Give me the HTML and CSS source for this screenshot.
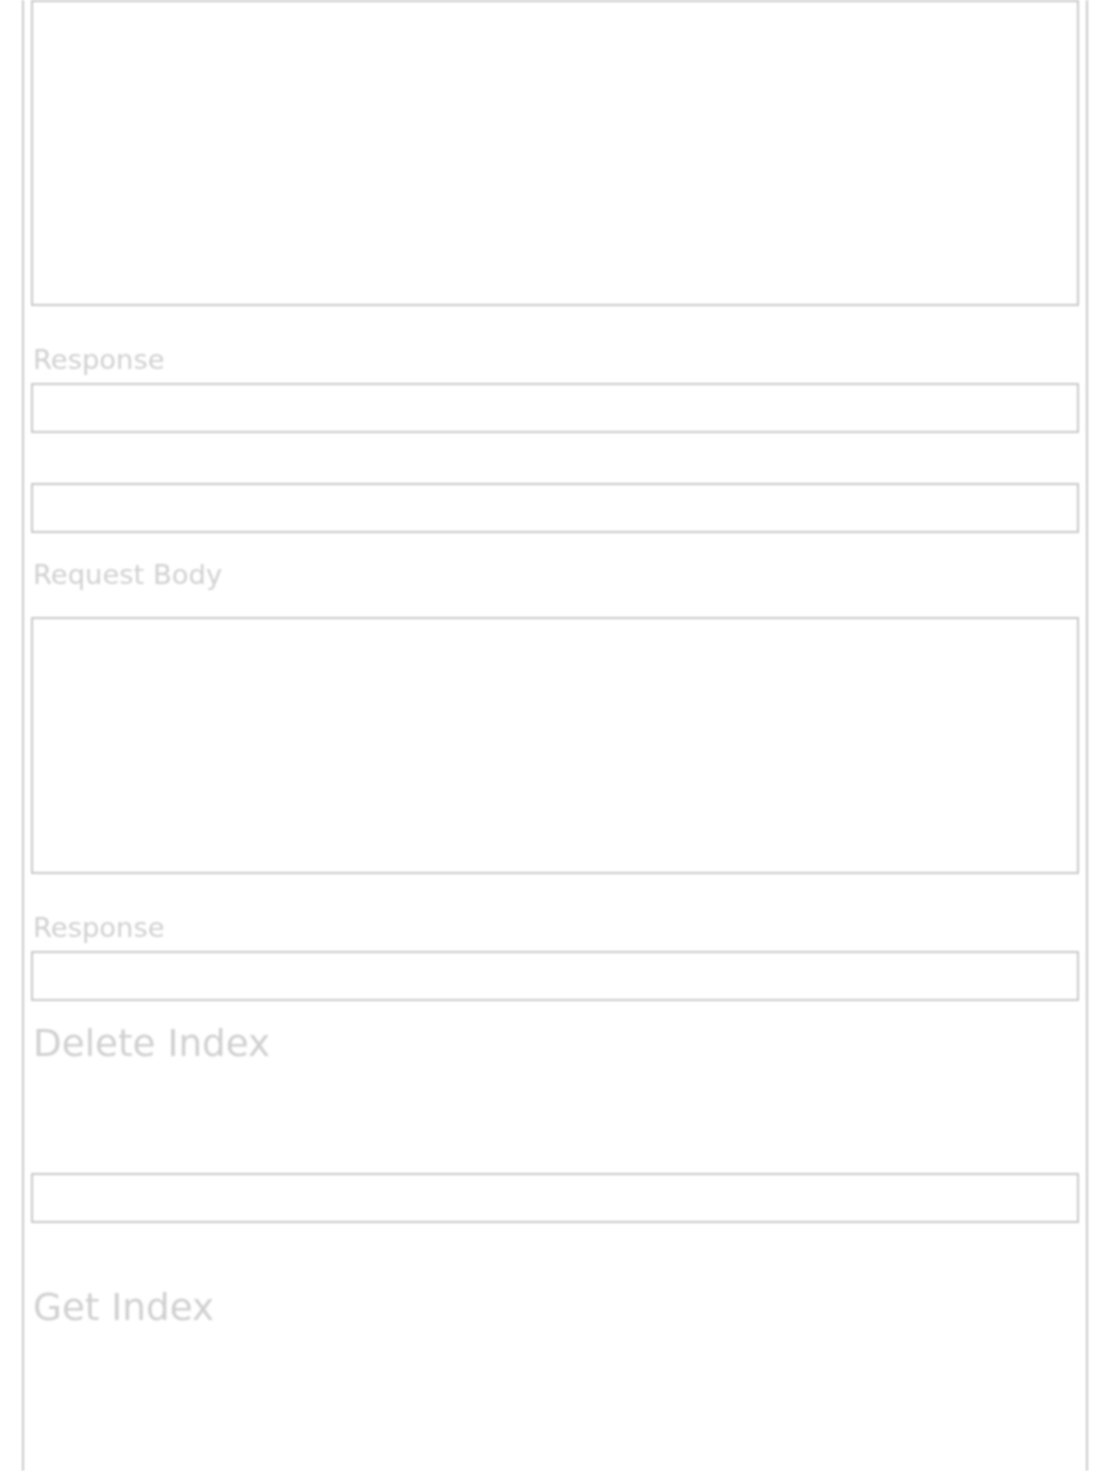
FILE: index.html
```html
<!DOCTYPE html>
<html lang="en">
<head>
<meta charset="utf-8">
<title>Index API</title>
<link rel="stylesheet" href="styles.css">
</head>
<body>
<div class="page">
  <textarea class="field area area-tall"></textarea>
  <label class="label label-gap">Response</label>
  <input class="field line line-first" type="text">
  <input class="field line line-second" type="text">
  <label class="label label-body">Request Body</label>
  <textarea class="field area area-short"></textarea>
  <label class="label label-gap">Response</label>
  <input class="field line line-first" type="text">
  <h2 class="heading heading-delete">Delete Index</h2>
  <input class="field line line-delete" type="text">
  <h2 class="heading heading-get">Get Index</h2>
</div>
</body>
</html>
```

FILE: styles.css
```css
html, body {
  margin: 0;
  padding: 0;
  background: #ffffff;
}

body {
  font-family: "DejaVu Sans", Verdana, sans-serif;
  overflow: hidden;
}

.page {
  box-sizing: border-box;
  margin: 0 22px;
  border-left: 2px solid #c8c8c8;
  border-right: 2px solid #c8c8c8;
  padding: 0 7px;
  min-height: 1471px;
  display: flex;
  flex-direction: column;
  filter: blur(0.9px);
}

.field {
  display: block;
  box-sizing: border-box;
  width: 100%;
  margin: 0;
  padding: 0;
  border: 2px solid #c8c8c8;
  border-radius: 0;
  background: #ffffff;
  outline: none;
  resize: none;
  font: inherit;
}

.area-tall {
  height: 306px;
}

.area-short {
  height: 257px;
  margin-top: 27px;
}

.line {
  height: 50px;
}

.line-first {
  margin-top: 8px;
}

.line-second {
  margin-top: 50px;
}

.line-delete {
  margin-top: 108px;
}

.label {
  display: block;
  padding-left: 2px;
  font-size: 27.4px;
  line-height: 31px;
  color: #d0d0d0;
}

.label-gap {
  margin-top: 38px;
}

.label-body {
  margin-top: 26px;
}

.heading {
  margin: 0;
  padding-left: 2px;
  font-size: 37.3px;
  line-height: 43px;
  font-weight: normal;
  color: #d0d0d0;
}

.heading-delete {
  margin-top: 21px;
}

.heading-get {
  margin-top: 63px;
}
```
